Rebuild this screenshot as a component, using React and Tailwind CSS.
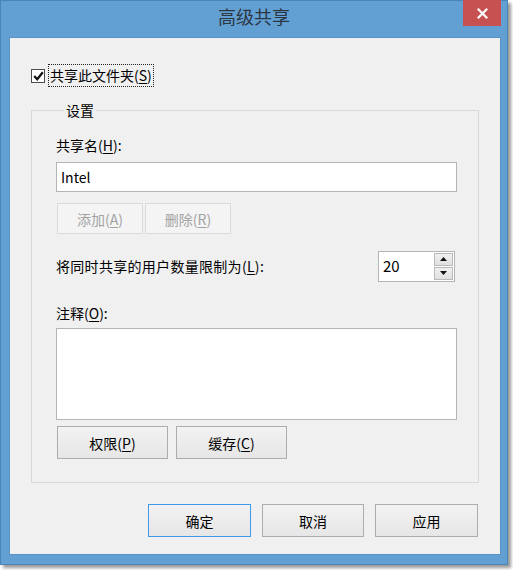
import React from 'react';

const font = { fontFamily: '"Noto Sans CJK SC", "Noto Sans", sans-serif' };

const Mn = ({ children }) => <span className="underline underline-offset-2">{children}</span>;

const WinButton = ({ children, className = '', disabled = false, focused = false }) => (
  <button
    disabled={disabled}
    className={
      'flex items-center justify-center text-[14px] leading-[20px] border ' +
      (disabled
        ? 'bg-[#f4f4f4] border-[#dadada] text-[#a3a3a3] '
        : focused
        ? 'bg-gradient-to-b from-[#f2f2f2] to-[#e6e6e6] border-[#3c9ae8] text-black '
        : 'bg-gradient-to-b from-[#f2f2f2] to-[#e6e6e6] border-[#adadad] text-black ') +
      className
    }
  >
    {children}
  </button>
);

const Arrow = ({ up }) => (
  <svg width="7" height="4" viewBox="0 0 7 4">
    {up ? <polygon points="0,4 7,4 3.5,0" fill="#111" /> : <polygon points="0,0 7,0 3.5,4" fill="#111" />}
  </svg>
);

export default function App() {
  return (
    <div className="w-[513px] h-[570px] bg-white" style={font}>
      <div className="w-[508px] h-[565px] bg-[#62a0d4] border border-[#4b84b8] shadow-[3px_3px_3px_rgba(0,0,0,0.4)] flex flex-col">
        {/* title bar */}
        <div className="relative h-[36px] flex items-start justify-center">
          <span className="mt-[3px] text-[18px] leading-[25px] text-[#2a3642]">高级共享</span>
          <div className="absolute right-[6px] top-[-1px] w-[38px] h-[26px] bg-[#c75050] flex items-center justify-center">
            <svg width="11" height="11" viewBox="0 0 11 11">
              <path d="M1.5 1.5 L9.5 9.5 M9.5 1.5 L1.5 9.5" stroke="#fff" strokeWidth="2.2" strokeLinecap="square" />
            </svg>
          </div>
        </div>

        {/* client area */}
        <div className="ml-[8px] mr-[6px] h-[518px] bg-[#f0f0f0] border border-[#5a92c6] text-black flex flex-col">
          <div className="flex items-center ml-[21px] mt-[26px] h-[23px]">
            <div className="w-[14px] h-[14px] bg-white border border-[#4d4d4d] flex items-center justify-center">
              <svg width="11" height="10" viewBox="0 0 11 10">
                <path d="M1.2 5 L4.2 8.2 L9.8 1.2" stroke="#111" strokeWidth="2.2" fill="none" />
              </svg>
            </div>
            <span className="ml-[3px] h-[23px] px-[1px] border border-dotted border-[#222] text-[14px] leading-[21px]">
              共享此文件夹(<Mn>S</Mn>)
            </span>
          </div>

          <fieldset className="ml-[21px] mt-[13px] w-[448px] h-[383px] border border-[#d8d8d8] pl-[24px] pr-[21px]">
            <legend className="ml-[8px] px-[2px] text-[14px] leading-[20px]">设置</legend>

            <div className="mt-[15px] text-[14px] leading-[20px]">
              共享名(<Mn>H</Mn>):
            </div>
            <div className="mt-[7px] h-[30px] bg-white border border-[#b5b5b5] flex items-center pl-[4px] text-[14px]">
              Intel
            </div>

            <div className="mt-[11px] flex gap-[2px] ml-[1px]">
              <WinButton disabled className="w-[86px] h-[31px]">
                添加(<Mn>A</Mn>)
              </WinButton>
              <WinButton disabled className="w-[86px] h-[31px]">
                删除(<Mn>R</Mn>)
              </WinButton>
            </div>

            <div className="mt-[17px] h-[30px] flex items-center justify-between">
              <span className="text-[14px] leading-[20px] tracking-[0.3px]">
                将同时共享的用户数量限制为(<Mn>L</Mn>):
              </span>
              <div className="mr-[2px] w-[77px] h-[31px] bg-white border border-[#b5b5b5] flex">
                <div className="flex-1 flex items-center pl-[4px] text-[15px]">20</div>
                <div className="w-[21px] flex flex-col p-[1px] gap-[1px]">
                  <div className="flex-1 bg-gradient-to-b from-[#f0f0f0] to-[#e0e0e0] border border-[#b9b9b9] flex items-center justify-center">
                    <Arrow up />
                  </div>
                  <div className="flex-1 bg-gradient-to-b from-[#f0f0f0] to-[#e0e0e0] border border-[#b9b9b9] flex items-center justify-center">
                    <Arrow />
                  </div>
                </div>
              </div>
            </div>

            <div className="mt-[22px] text-[14px] leading-[20px]">
              注释(<Mn>O</Mn>):
            </div>
            <div className="mt-[5px] h-[92px] bg-white border border-[#b5b5b5]" />

            <div className="mt-[6px] flex gap-[8px] ml-[1px]">
              <WinButton className="w-[111px] h-[33px]">
                权限(<Mn>P</Mn>)
              </WinButton>
              <WinButton className="w-[111px] h-[33px]">
                缓存(<Mn>C</Mn>)
              </WinButton>
            </div>
          </fieldset>

          <div className="mt-[21px] flex justify-end gap-[11px] pr-[22px]">
            <WinButton focused className="w-[103px] h-[33px]">确定</WinButton>
            <WinButton className="w-[102px] h-[33px]">取消</WinButton>
            <WinButton className="w-[103px] h-[33px]">应用</WinButton>
          </div>
        </div>
      </div>
    </div>
  );
}
